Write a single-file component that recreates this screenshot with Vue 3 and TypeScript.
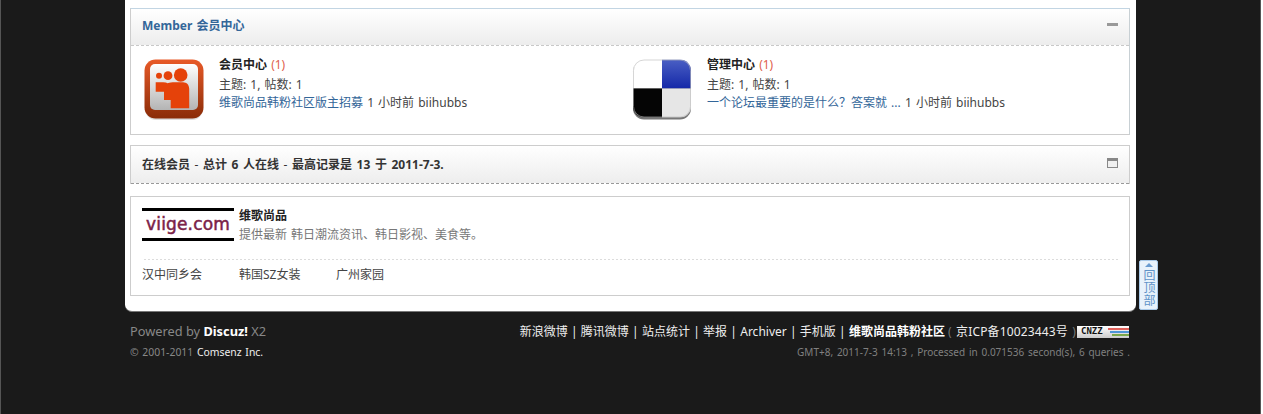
<script setup lang="ts">
interface Forum {
  name: string;
  threads: number;
  posts: number;
  lastPost: string;
  icon: 'people' | 'squares';
}

const forums: Forum[] = [
  { name: '会员中心', threads: 1, posts: 1, lastPost: '维歌尚品韩粉社区版主招募', icon: 'people' },
  { name: '管理中心', threads: 1, posts: 1, lastPost: '一个论坛最重要的是什么？答案就 ...', icon: 'squares' },
];

const textLinks = ['汉中同乡会', '韩国SZ女装', '广州家园'];
const footerLinks = ['新浪微博', '腾讯微博', '站点统计', '举报', 'Archiver', '手机版'];
</script>

<template>
  <div class="page">
    <div class="wrap">
      <section class="box box--member">
        <header class="box__head">
          <h2 class="box__title">Member 会员中心</h2>
          <span class="collapse" aria-hidden="true"></span>
        </header>
        <div class="forums">
          <div v-for="forum in forums" :key="forum.name" class="forum">
            <svg v-if="forum.icon === 'people'" class="forum__icon" viewBox="0 0 60 62" aria-hidden="true">
              <defs>
                <linearGradient id="ppl-rim" x1="0" y1="0" x2="0" y2="1">
                  <stop offset="0" stop-color="#e85a28" />
                  <stop offset="1" stop-color="#8a2c08" />
                </linearGradient>
                <linearGradient id="ppl-face" x1="0" y1="0" x2="0" y2="1">
                  <stop offset="0" stop-color="#ffffff" />
                  <stop offset="1" stop-color="#b4b4b4" />
                </linearGradient>
              </defs>
              <rect x="1" y="2" width="58" height="59" rx="11" fill="#bbb" opacity=".5" />
              <rect x="0.500" y="0.500" width="59" height="59" rx="11" fill="url(#ppl-rim)" />
              <rect x="6" y="5" width="48" height="46" rx="5" fill="url(#ppl-face)" />
              <g fill="#e5420a">
                <circle cx="36.700" cy="16" r="6.800" />
                <circle cx="24" cy="16.700" r="4.400" />
                <circle cx="15" cy="16.700" r="3" />
                <path d="M11.700 23.300h7.500c1.800 0 3.300.4 4.500 1 2-.8 4.500-1 6.500-1h8.800c3.800 0 6.200 2.800 6.200 6.500v19.500H26.700V41H20v-8.300h-8.300z" />
              </g>
            </svg>
            <svg v-else class="forum__icon" viewBox="0 0 60 62" aria-hidden="true">
              <defs>
                <clipPath id="sq-clip"><rect x="1" y="0.500" width="58" height="58" rx="11" /></clipPath>
                <linearGradient id="sq-blue" x1="0" y1="0" x2="0" y2="1">
                  <stop offset="0" stop-color="#4a5fc4" />
                  <stop offset="1" stop-color="#1428a8" />
                </linearGradient>
              </defs>
              <rect x="1" y="1.500" width="58" height="59" rx="11" fill="#777" />
              <g clip-path="url(#sq-clip)">
                <rect x="1" y="0.500" width="29" height="29" fill="#fff" />
                <rect x="30" y="0.500" width="29" height="29" fill="url(#sq-blue)" />
                <rect x="1" y="29.500" width="29" height="29" fill="#050505" />
                <rect x="30" y="29.500" width="29" height="29" fill="#e6e6e6" />
              </g>
              <rect x="1.500" y="1" width="57" height="57" rx="10.500" fill="none" stroke="#bbb" stroke-width=".6" />
            </svg>
            <div class="forum__info">
              <div class="forum__name"><strong>{{ forum.name }}</strong> <span class="forum__today">(1)</span></div>
              <div>主题: {{ forum.threads }}, 帖数: {{ forum.posts }}</div>
              <div><a class="forum__last">{{ forum.lastPost }}</a> 1 小时前 biihubbs</div>
            </div>
          </div>
        </div>
      </section>

      <section class="box box--online">
        <header class="box__head box__head--online">
          <h2 class="box__title box__title--dark">在线会员 <span class="thin">-</span> 总计 6 人在线 <span class="thin">-</span> 最高记录是 13 于 2011-7-3.</h2>
          <span class="expand" aria-hidden="true"></span>
        </header>
      </section>

      <section class="box box--links">
        <div class="site">
          <div class="logo"><span class="logo__text">viige.com</span></div>
          <div class="site__info">
            <div class="site__name">维歌尚品</div>
            <div class="site__desc">提供最新 韩日潮流资讯、韩日影视、美食等。</div>
          </div>
        </div>
        <ul class="text-links">
          <li v-for="link in textLinks" :key="link">{{ link }}</li>
        </ul>
      </section>

      <a class="back-top">
        <span class="back-top__arrow" aria-hidden="true"></span>
        <span class="back-top__text">回顶部</span>
      </a>
    </div>

    <footer class="footer">
      <div class="footer__row">
        <div class="powered">Powered by <strong>Discuz!</strong> X2</div>
        <div class="footer__nav">
          <template v-for="link in footerLinks" :key="link">
            <a>{{ link }}</a><span class="pipe">|</span>
          </template>
          <strong>维歌尚品韩粉社区</strong>
          <span class="icp"><span class="paren">(</span> 京ICP备10023443号 <span class="paren">)</span></span>
          <span class="cnzz" aria-label="CNZZ">
            <span class="cnzz__text">CNZZ</span>
            <svg class="cnzz__bars" viewBox="0 0 21 10" aria-hidden="true">
              <rect x="0" y="1" width="21" height="2" fill="#e0605a" />
              <rect x="2" y="4" width="19" height="2" fill="#4d96d8" />
              <rect x="4" y="7" width="17" height="2" fill="#7ba84a" />
            </svg>
          </span>
        </div>
      </div>
      <div class="footer__row footer__row--small">
        <div class="copy">© 2001-2011 <a>Comsenz Inc.</a></div>
        <div class="debug">GMT+8, 2011-7-3 14:13 , Processed in 0.071536 second(s), 6 queries .</div>
      </div>
    </footer>
  </div>
</template>

<style>
html,
body {
  margin: 0;
  background: #1a1a1a;
}
</style>

<style scoped>
.page {
  box-sizing: border-box;
  width: 1263px;
  height: 414px;
  overflow: hidden;
  padding-left: 124px;
  background: #1a1a1a;
  border-left: 1px solid #555;
  border-right: 2px solid #fff;
  box-shadow: inset -1px 0 0 #555;
  font: 12px/18px "Noto Sans", "Noto Sans CJK SC", sans-serif;
  word-spacing: 1px;
  color: #444;
}

.wrap {
  position: relative;
  box-sizing: border-box;
  width: 1011px;
  height: 312px;
  padding: 8px 6px 0 5px;
  background: #fff;
  border-bottom: 1px solid #777;
  border-radius: 0 0 7px 7px;
}

.box {
  box-sizing: border-box;
  width: 1000px;
  border: 1px solid #cdcdcd;
  background: #fff;
}

.box--member {
  height: 127px;
  border-top-color: #c2d5e3;
  border-right-color: #c8d0d4;
}

.box--online {
  height: 39px;
  margin-top: 10px;
  border-bottom: 0;
}

.box--links {
  height: 100px;
  margin-top: 12px;
  padding: 11px 11px 0;
}

.box__head {
  display: flex;
  align-items: center;
  justify-content: space-between;
  box-sizing: border-box;
  height: 37px;
  padding: 0 11px 2px;
  background: linear-gradient(180deg, #fff 0%, #ededed 100%);
  border-bottom: 1px dashed #c8c8c8;
}

.box__head--online {
  height: 38px;
  padding-bottom: 0;
  border-bottom-color: #999;
}

.box__title {
  margin: 0;
  font-size: 12px;
  font-weight: 700;
  color: #369;
}

.box__title--dark {
  color: #333;
  word-spacing: 1.450px;
}

.thin {
  font-weight: 400;
}

.collapse {
  width: 11px;
  height: 3px;
  margin-bottom: 3px;
  background: #999;
}

.expand {
  box-sizing: border-box;
  width: 11px;
  height: 10px;
  margin-bottom: 4px;
  background: #f0f0f0;
  border: 1px solid #888;
  border-top-width: 3px;
}

.forums {
  display: grid;
  grid-template-columns: 488px 1fr;
  padding: 13px 13px 0;
}

.forum {
  display: flex;
}

.forum__icon {
  flex: none;
  width: 60px;
  height: 62px;
}

.forum__info {
  margin-top: -2px;
  padding-left: 15px;
  line-height: 18.500px;
}

.forum__name {
  margin: -1px 0 1px;
}

.forum__name strong {
  color: #222;
}

.forum__today {
  color: #e0604c;
}

.forum__last {
  color: #369;
}

.site {
  display: flex;
}

.logo {
  display: flex;
  align-items: center;
  justify-content: center;
  box-sizing: border-box;
  width: 92px;
  height: 33px;
  border-top: 3px solid #000;
  border-bottom: 3px solid #000;
}

.logo__text {
  font: 400 17px/1 "DejaVu Sans", sans-serif;
  letter-spacing: 0.15px;
  -webkit-text-stroke: 0.5px #7b2248;
  color: #7b2248;
}

.site__info {
  margin-top: -1px;
  padding-left: 5px;
}

.site__name {
  font-weight: 700;
  color: #222;
}

.site__desc {
  margin-top: 1px;
  color: #777;
}

.text-links {
  display: flex;
  margin: 15px 0 0;
  padding: 7px 0 0;
  list-style: none;
  background: linear-gradient(90deg, #dcdcdc 50%, transparent 50%) 2px 0 / 4px 1px repeat-x;
}

.text-links li {
  width: 97px;
  color: #444;
}

.back-top {
  position: absolute;
  top: 260px;
  left: 1014px;
  display: flex;
  flex-direction: column;
  align-items: center;
  box-sizing: border-box;
  width: 19px;
  height: 50px;
  padding-top: 2px;
  background: #e8f2fb;
  border: 1px solid #a9c9e8;
  border-radius: 2px;
  color: #5f93c8;
}

.back-top__arrow {
  flex: none;
  width: 0;
  height: 0;
  margin-bottom: 2px;
  border: 4px solid transparent;
  border-top: 0;
  border-bottom: 4px solid #6a9bd0;
}

.back-top__text {
  writing-mode: vertical-rl;
  font-size: 12px;
  line-height: 17px;
  letter-spacing: 0.7px;
}

.footer {
  width: 1000px;
  margin-left: 5px;
}

.footer__row {
  display: flex;
  align-items: center;
  justify-content: space-between;
  margin-top: 9px;
  height: 19px;
}

.footer__row--small {
  margin-top: 2px;
  height: 20px;
}

.powered {
  font-size: 12.800px;
  word-spacing: 0;
  color: #888;
}

.powered strong {
  color: #fff;
}

.footer__nav {
  display: flex;
  align-items: center;
  padding-top: 2px;
  color: #eee;
}

.pipe {
  margin: 0 3.250px;
}

.footer__nav strong {
  color: #fff;
}

.icp {
  margin-left: 3px;
  letter-spacing: 0.15px;
  white-space: pre;
}

.paren {
  color: #777;
}

.cnzz {
  display: flex;
  align-items: center;
  justify-content: space-between;
  box-sizing: border-box;
  width: 52px;
  height: 12px;
  margin: 0 1px;
  padding: 0 0 0 4px;
  background: linear-gradient(180deg, #fff, #ccc);
}

.cnzz__text {
  font: 700 9px/1 "DejaVu Sans Mono", monospace;
  color: #111;
}

.cnzz__bars {
  width: 21px;
  height: 10px;
}

.copy {
  font-size: 10.400px;
  color: #888;
}

.copy a {
  color: #eee;
}

.debug {
  font-size: 10px;
  word-spacing: 1.200px;
  color: #808080;
}
</style>
